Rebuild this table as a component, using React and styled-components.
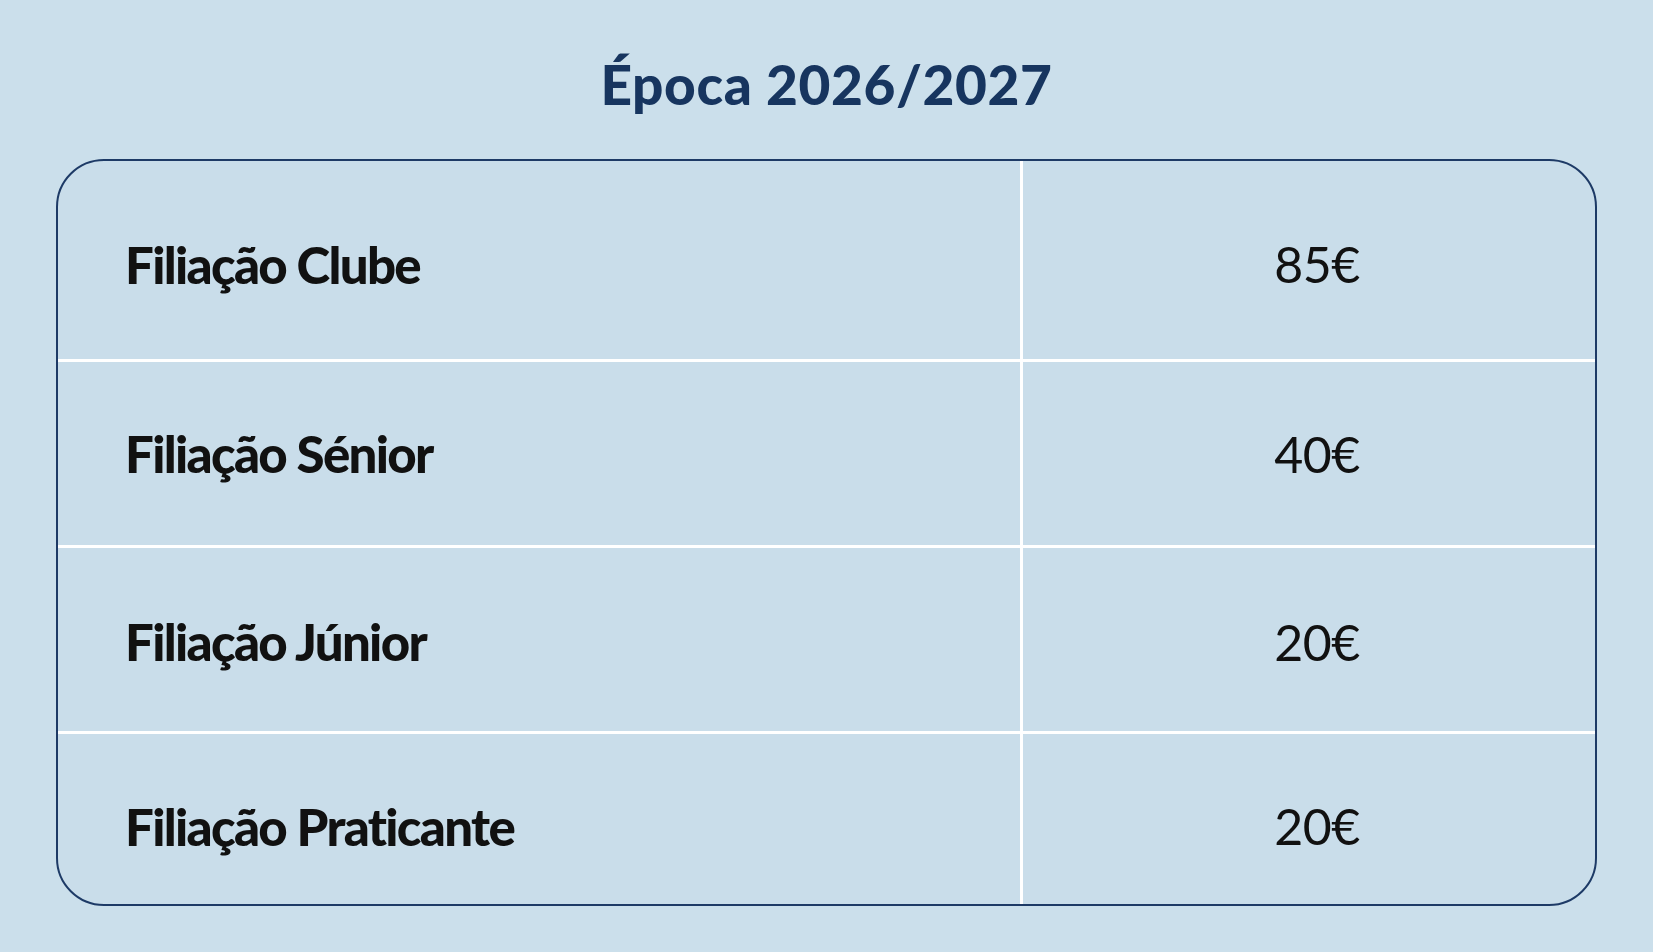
import React from "react";
import styled, { createGlobalStyle } from "styled-components";

const GlobalStyle = createGlobalStyle`
  * { box-sizing: border-box; }
  html, body { margin: 0; padding: 0; }
  body {
    background: #cbdfeb;
    font-family: "Lato", "Liberation Sans", sans-serif;
  }
`;

const Page = styled.div`
  width: 1653px;
  height: 952px;
  display: flex;
  flex-direction: column;
  align-items: center;
  padding-top: 51px;
  background: #cbdfeb;
`;

const Title = styled.h1`
  margin: 0 0 42px;
  font-family: "Lato", "Liberation Sans", sans-serif;
  font-weight: 900;
  font-size: 55px;
  line-height: 1.2;
  letter-spacing: 0.6px;
  color: #17355f;
`;

const Card = styled.div`
  width: 1541px;
  height: 747px;
  border: 2px solid #1d3a66;
  border-radius: 48px;
  background: #c9ddea;
  display: flex;
  flex-direction: column;
  overflow: hidden;
`;

const Row = styled.div`
  display: grid;
  grid-template-columns: 965px 1fr;
  height: ${(p) => p.$h}px;
  padding-top: ${(p) => p.$pt}px;
  border-top: ${(p) => (p.$first ? "none" : "3px solid #ffffff")};
`;

const Label = styled.div`
  display: flex;
  align-items: center;
  padding-left: 67px;
  margin-top: ${(p) => -p.$pt}px;
  padding-top: ${(p) => p.$pt}px;
  border-right: 3px solid #ffffff;
  font-weight: 900;
  font-size: 51px;
  letter-spacing: -1.7px;
  color: #111111;
`;

const Price = styled.div`
  display: flex;
  align-items: center;
  justify-content: center;
  padding-left: 16px;
  font-weight: 400;
  font-size: 50px;
  letter-spacing: -0.5px;
  color: #111111;
`;

const rows = [
  { label: "Filiação Clube", price: "85€", h: 198, pt: 8 },
  { label: "Filiação Sénior", price: "40€", h: 186, pt: 0 },
  { label: "Filiação Júnior", price: "20€", h: 186, pt: 4 },
  { label: "Filiação Praticante", price: "20€", h: 173, pt: 14 },
];

export default function App() {
  return (
    <>
      <GlobalStyle />
      <Page>
        <Title>Época 2026/2027</Title>
        <Card>
          {rows.map((r, i) => (
            <Row key={r.label} $h={r.h} $pt={r.pt} $first={i === 0}>
              <Label $pt={r.pt}>{r.label}</Label>
              <Price>{r.price}</Price>
            </Row>
          ))}
        </Card>
      </Page>
    </>
  );
}
